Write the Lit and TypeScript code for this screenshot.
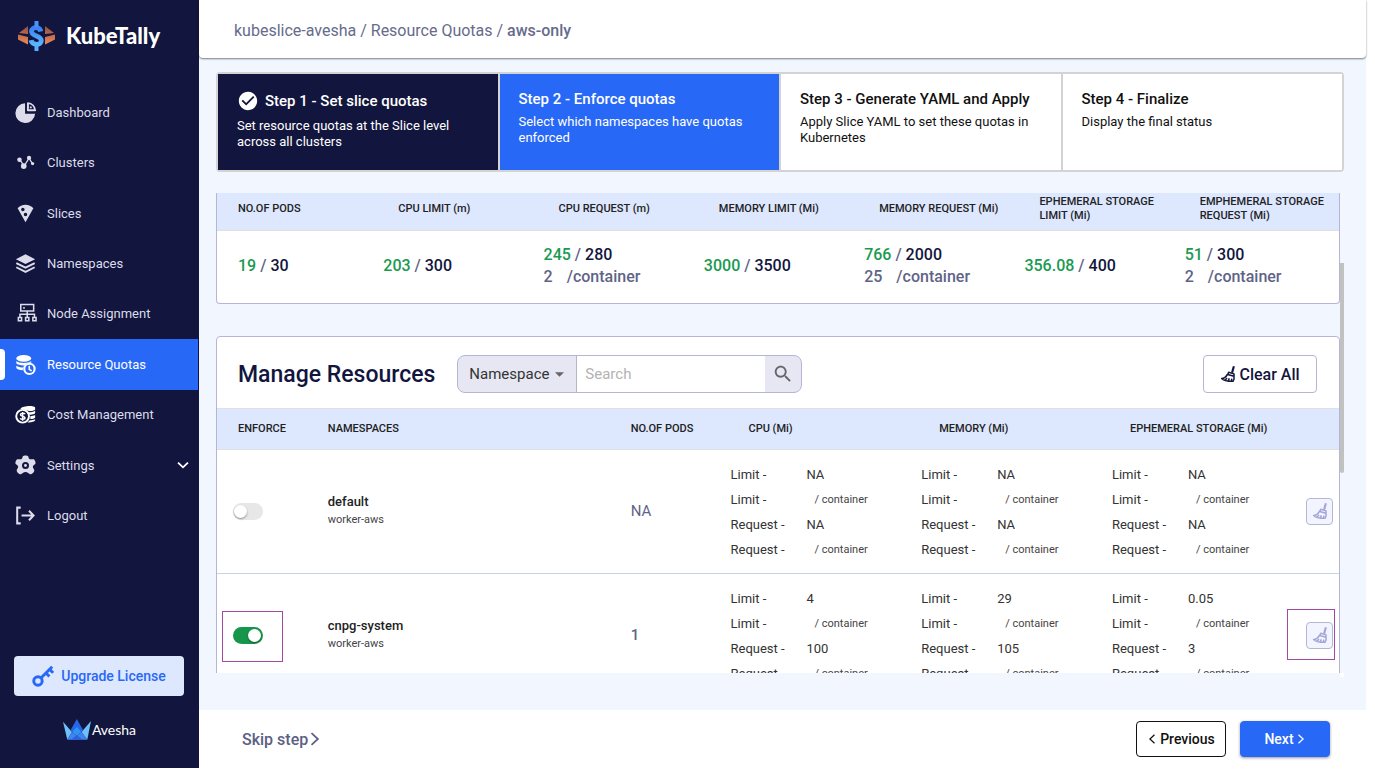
import { LitElement, html, css, svg, nothing } from "lit";
import { customElement } from "lit/decorators.js";
import { classMap } from "lit/directives/class-map.js";

const icons: Record<string, unknown> = {
  dashboard: svg`<path fill="currentColor" d="M11.500 1.500A11.300 11.300 0 1 0 23 13.500H11.500z"/><path fill="none" stroke="currentColor" stroke-width="2.200" stroke-linejoin="round" d="M14.800 1.300c4.300.3 7.800 3.600 8.200 8.200h-8.200zM18 5v2"/>`,
  clusters: svg`<path fill="none" stroke="currentColor" stroke-width="1.800" d="M4 8l6 9 7-11 5 8"/><g fill="currentColor"><circle cx="3.500" cy="8" r="3.200"/><circle cx="9.500" cy="17" r="4"/><circle cx="17" cy="5.500" r="3"/><circle cx="22" cy="13.500" r="2.300"/></g>`,
  slices: svg`<path fill="currentColor" fill-rule="evenodd" d="M12 2C8.400 2 5.200 3.500 3 5.900L12 22l9-16.100C18.800 3.500 15.600 2 12 2zM7 7.500a2 2 0 1 1 4 0 2 2 0 0 1-4 0zm5 7.500a2 2 0 1 1 0-4 2 2 0 0 1 0 4z"/>`,
  namespaces: svg`<path fill="currentColor" d="M12 1.500L1 7l11 5.500L23 7z"/><path fill="none" stroke="currentColor" stroke-width="2.200" d="M1.500 11.500L12 16.800l10.500-5.300M1.500 16.300L12 21.600l10.500-5.300"/>`,
  node: svg`<g transform="translate(2 0) scale(.92)"><g fill="none" stroke="currentColor" stroke-width="1.900"><path d="M5 2h16v8H5zM13 10v8M4 18v-4h18v4"/><path d="M2 18h4v4H2zM11 18h4v4h-4zM20 18h4v4h-4z"/></g><path fill="currentColor" d="M8 5h2v2H8z"/></g>`,
  quotas: svg`<g fill="currentColor"><ellipse cx="10" cy="5" rx="8.500" ry="3.800"/><path d="M1.500 8c2 2.500 13 3.500 17 0v2.200c-3-.5-6 .8-7.600 2.800-4.400.2-8-.8-9.400-2.500zM1.500 13.500c1.800 1.500 4.500 2 8 2-.5 1-.6 2-.5 3-4-.1-7-1.200-7.500-2.500z"/></g><circle cx="16.500" cy="17" r="5.900" fill="none" stroke="currentColor" stroke-width="2.400"/><path fill="none" stroke="currentColor" stroke-width="1.800" d="M16.300 13.500v4l2.700 1.800"/>`,
  cost: svg`<g fill="#fff"><path d="M6 5.500C9 1.500 22 1.500 23 4v2.500c-3 2-8 1.500-10 .5zM14.500 9c4 .8 6.500.2 8.500-1.300v3c-2 1.500-4 1.700-6.500 1.500zM17.500 14c2 0 4-.5 5.500-1.300v3c-1.500 1.200-3 1.600-5.500 1.500zM16.500 18.800c3 0 4.500-.4 6.500-1.300v1c-1 1.700-4 2.700-8.500 2.500z"/></g><circle cx="8.700" cy="14" r="7.300" fill="none" stroke="#fff" stroke-width="2.200"/><path fill="none" stroke="#fff" stroke-width="1.700" d="M11.400 11.600c-.7-1.400-5.200-1.600-5.200.7 0 2.300 5.200 1.200 5.200 3.500s-4.700 2.100-5.400.5M8.700 9v10"/>`,
  settings: svg`<path fill="currentColor" fill-rule="evenodd" d="M9 1.300C9.800.2 14.200.2 15 1.300c.7 1 .5 2.600 1.500 3.400 1 .8 3.400-.4 4.900.2 1.500.7 2.700 4.400 1.800 5.500-.8 1-2.500 1.400-2.800 2.700-.3 1.500 1.600 2.800 1.700 4.500 0 1.700-2.900 4.700-4.700 4.500-1.500-.2-2.900-2.600-5.400-2.600s-3.900 2.400-5.400 2.600c-1.800.2-4.700-2.800-4.700-4.500.1-1.700 2-3 1.700-4.500-.3-1.300-2-1.700-2.800-2.700-.9-1.100.3-4.800 1.800-5.500C4.100 4.300 6.500 5.500 7.500 4.700 8.500 3.900 8.300 2.300 9 1.300zM12 8a4 4 0 1 0 0 8 4 4 0 0 0 0-8zm0 2.300a1.700 1.700 0 1 1 0 3.400 1.700 1.700 0 0 1 0-3.400z"/>`,
  logout: svg`<path fill="none" stroke="currentColor" stroke-width="2.300" d="M6.500 3H2.500v18h4M7.500 12H21M16 6.500l5.200 5.500-5.200 5.500"/>`,
  broom: svg`<path fill="currentColor" d="M19.300 0l3 .9-2.500 9.600-3.300-.9z"/><path fill="none" stroke="currentColor" stroke-width="2.300" stroke-linejoin="round" d="M13 9.500l8 2.300v3.700l-9.500-2.800zM11 12.500C9 16.500 6 18.500 2.500 18.800 5 22 11 23 19.500 23c1.500-2.500 2-5.500 1.500-7.500M8 21l2.500-3M12.500 22l1.500-3.500M17 22.500l.8-3.500"/>`,
  key: svg`<circle cx="6.500" cy="17.500" r="4.600" fill="none" stroke="currentColor" stroke-width="3.200"/><path fill="none" stroke="currentColor" stroke-width="3.200" d="M9.500 14.500L22 2M15 8.500l4 4M19 4.500l4 4"/>`,
  search: svg`<path fill="currentColor" d="M15.500 14h-.79l-.28-.27C15.410 12.590 16 11.110 16 9.500 16 5.910 13.090 3 9.500 3S3 5.910 3 9.500 5.910 16 9.500 16c1.610 0 3.090-.59 4.230-1.570l.27.28v.79l5 4.990L20.490 19l-4.990-5zm-6 0C7.010 14 5 11.990 5 9.500S7.010 5 9.500 5 14 7.010 14 9.500 11.990 14 9.500 14z"/>`,
  check: svg`<path fill="currentColor" d="M12 2C6.480 2 2 6.480 2 12s4.480 10 10 10 10-4.480 10-10S17.520 2 12 2zm-2 15l-5-5 1.410-1.410L10 14.170l7.590-7.590L19 8l-9 9z"/>`,
  down: svg`<path fill="none" stroke="currentColor" stroke-width="3.200" d="M3.500 8l8.500 8 8.500-8"/>`,
  left: svg`<path fill="none" stroke="currentColor" stroke-width="3" d="M18 2L7 12l11 10"/>`,
  right: svg`<path fill="none" stroke="currentColor" stroke-width="3" d="M6 2l11 10L6 22"/>`,
};

const icon = (name: string, cls: string) =>
  html`<svg class=${cls} viewBox="0 0 24 24" aria-hidden="true">${icons[name]}</svg>`;

const navItems = [
  ["dashboard", "Dashboard"],
  ["clusters", "Clusters"],
  ["slices", "Slices"],
  ["namespaces", "Namespaces"],
  ["node", "Node Assignment"],
  ["quotas", "Resource Quotas"],
  ["cost", "Cost Management"],
  ["settings", "Settings"],
  ["logout", "Logout"],
];

const steps = [
  { title: "Step 1 - Set slice quotas", text: "Set resource quotas at the Slice level across all clusters", state: "done" },
  { title: "Step 2 - Enforce quotas", text: "Select which namespaces have quotas enforced", state: "current" },
  { title: "Step 3 - Generate YAML and Apply", text: "Apply Slice YAML to set these quotas in Kubernetes", state: "" },
  { title: "Step 4 - Finalize", text: "Display the final status", state: "" },
];

const totals = [
  { label: "NO.OF PODS", used: "19", max: "30", per: "" },
  { label: "CPU LIMIT (m)", used: "203", max: "300", per: "" },
  { label: "CPU REQUEST (m)", used: "245", max: "280", per: "2" },
  { label: "MEMORY LIMIT (Mi)", used: "3000", max: "3500", per: "" },
  { label: "MEMORY REQUEST (Mi)", used: "766", max: "2000", per: "25" },
  { label: "EPHEMERAL STORAGE LIMIT (Mi)", used: "356.08", max: "400", per: "" },
  { label: "EMPHEMERAL STORAGE REQUEST (Mi)", used: "51", max: "300", per: "2" },
];

const rows = [
  { name: "default", worker: "worker-aws", on: false, pods: "NA", quotas: [["NA", "NA"], ["NA", "NA"], ["NA", "NA"]] },
  { name: "cnpg-system", worker: "worker-aws", on: true, pods: "1", quotas: [["4", "100"], ["29", "105"], ["0.05", "3"]] },
];

@customElement("app-sidebar")
export class AppSidebar extends LitElement {
  static styles = css`
    :host {
      display: flex;
      flex-direction: column;
      width: 199px;
      flex: none;
      box-sizing: border-box;
      background: #12153d;
      color: #dcdcea;
    }
    .brand {
      display: flex;
      align-items: center;
      gap: 11px;
      height: 72px;
      padding-left: 18px;
      margin-bottom: 15px;
      color: #fff;
      font: 900 22px/24px Lato, sans-serif;
    }
    .brand-mark { width: 37px; height: 30px; }
    .nav {
      display: grid;
      grid-auto-rows: 1fr;
      height: 454px;
    }
    .item {
      position: relative;
      display: flex;
      align-items: center;
      margin-right: 1px;
      padding: 0 8px 0 15px;
      color: inherit;
      text-decoration: none;
      font-size: 13px;
    }
    .label { flex: 1; }
    .item.active { background: #2868f6; color: #fff; }
    .item.active::before {
      content: "";
      position: absolute;
      left: 0;
      top: 10px;
      bottom: 10px;
      width: 5px;
      border-radius: 0 4px 4px 0;
      background: #fff;
    }
    .nav-icon { width: 21px; height: 21px; margin-right: 11px; overflow: visible; }
    .nav-icon.small { width: 17px; height: 17px; margin: 0 13px 0 2px; }
    .chevron { width: 14px; height: 14px; color: #fff; }
    .upgrade {
      display: flex;
      align-items: center;
      justify-content: center;
      gap: 7px;
      height: 40px;
      margin: auto 15px 20px 14px;
      border: 0;
      border-radius: 4px;
      background: #dde7fe;
      color: #2868f6;
      font: 500 14px/20px Roboto, sans-serif;
    }
    .key { width: 22px; height: 22px; }
    .maker {
      display: flex;
      align-items: center;
      justify-content: center;
      gap: 1px;
      height: 28px;
      margin-bottom: 24px;
      color: #fff;
      font: 400 14px/20px Lato, sans-serif;
    }
    .crown { width: 28px; height: 22px; }
  `;

  render() {
    return html`
      <div class="brand">
        <svg class="brand-mark" viewBox="0 0 37 30" aria-hidden="true">
          <defs>
            <linearGradient id="rust" x2="0" y2="1"><stop stop-color="#8f4f3d" /><stop offset="1" stop-color="#f08a5c" /></linearGradient>
            <linearGradient id="sky" x2="0" y2="1"><stop stop-color="#3b82f6" /><stop offset="1" stop-color="#5bb5ff" /></linearGradient>
          </defs>
          <path fill="url(#rust)" d="M10 5v8L1 12zM0 13.500l10 2.500v7.500l-10-5zM27 5v8l9-1zM37 13.500L27 16v7.500l10-5z" />
          <path fill="none" stroke="url(#sky)" stroke-width="4.800" d="M22.800 10.500C22 5.500 13.500 5.500 13.500 10.300c0 5.700 9.800 3.700 9.800 9.400 0 5-9.500 5-10.300-.5" />
          <path fill="#4595fa" d="M16.500 0h4v6h-4z" />
          <path fill="#58b0ff" d="M16.500 24h4v6h-4z" />
        </svg>
        <span>KubeTally</span>
      </div>
      <nav class="nav">
        ${navItems.map(
          ([id, label]) => html`<a href="#" class=${classMap({ item: true, active: id === "quotas" })}>
            ${icon(id, id === "clusters" ? "nav-icon small" : "nav-icon")}
            <span class="label">${label}</span>
            ${id === "settings" ? icon("down", "chevron") : nothing}
          </a>`
        )}
      </nav>
      <button class="upgrade">${icon("key", "key")}Upgrade License</button>
      <div class="maker">
        <svg class="crown" viewBox="0 0 28 22" aria-hidden="true">
          <path fill="#6cc0fb" d="M0 2.700L9 13 4.300 20.700z" />
          <path fill="#6cc0fb" d="M28 2l-9.500 11 5.800 7.700z" />
          <path fill="#2767e6" d="M13.800 0L7.500 11.300l6.300 5 6.400-5z" />
          <path fill="#2f93f5" d="M13.800 8L9 13l4.800 4 4.700-4z" />
          <path fill="#3f84f0" d="M9 13l-4.700 7.700h20L18.500 13l-4.700 4z" />
          <path fill="#2a62dc" d="M13.800 16l-6 4.700h12z" />
        </svg>
        <span>Avesha</span>
      </div>
    `;
  }
}

@customElement("app-root")
export class AppRoot extends LitElement {
  static styles = css`
    :host {
      display: flex;
      box-sizing: border-box;
      height: 100vh;
      padding: 0 9px 14px 0;
      background: #fff;
      color: #222;
      font-family: Roboto, sans-serif;
    }
    .page { display: flex; flex: 1; min-width: 0; flex-direction: column; background: #f2f7ff; }
    .top {
      position: relative;
      height: 58px;
      padding: 0 35px;
      display: flex;
      align-items: center;
      border-radius: 0 0 4px 4px;
      background: #fff;
      box-shadow: 0 1px 2px rgba(0, 0, 0, 0.5);
      box-sizing: border-box;
    }
    .crumbs { padding-top: 4px; color: #666b8c; font-size: 16px; line-height: 20px; }
    .crumbs a { color: inherit; text-decoration: none; }
    .crumbs b { font-weight: 500; }
    .content {
      display: flex;
      flex: 1;
      min-height: 0;
      flex-direction: column;
      gap: 21px;
      padding: 14px 22px 33px 17px;
    }
    .steps {
      display: grid;
      grid-template-columns: repeat(4, 1fr);
      gap: 2px;
      min-height: 96px;
      margin: 0;
      padding: 0;
      list-style: none;
      border: 2px solid #d3d3d3;
      border-radius: 4px;
      background: #d3d3d3;
    }
    .step { padding: 15px 19px; background: #fff; color: #111; }
    .step.done { background: #12153d; color: #fff; }
    .step.current { background: #2868f6; color: #fff; }
    .step-title { display: flex; align-items: center; gap: 6px; min-height: 20px; font-size: 15px; line-height: 20px; font-weight: 500; }
    .step.done .step-title { min-height: 24px; }
    .step-text { margin: 5px 0 0; font-size: 13px; line-height: 16px; }
    .check { width: 22px; height: 22px; }
    .viewport {
      display: grid;
      flex: 1;
      min-height: 0;
      grid-template-columns: minmax(0, 1fr) 4px;
      grid-template-rows: minmax(0, 1fr) 4px;
    }
    .scroll { overflow: hidden; }
    .track { display: flex; flex-direction: column; padding-top: 70px; }
    .thumb { height: 210px; border-radius: 0 0 3px 3px; background: #c1c1c1; }
    .corner { grid-column: 2; background: #fff; }
    .card { border: 1px solid #b5b5d6; border-radius: 4px; background: #fff; overflow: hidden; }
    .card.clipped { margin-bottom: 32px; border-top: 0; border-radius: 0 0 4px 4px; }
    table { width: 100%; border-collapse: collapse; table-layout: fixed; }
    th {
      box-sizing: border-box;
      padding: 0 0 0 21px;
      border-bottom: 1px solid #e0e0e0;
      background: #dde7fe;
      font-size: 11px;
      line-height: 14px;
      font-weight: 500;
      text-align: left;
    }
    td { box-sizing: border-box; padding: 0; }
    .totals th { height: 37px; padding-bottom: 4px; }
    .totals td { height: 73px; padding: 0 0 2px 6px; color: #5f6487; font-size: 16px; line-height: 22px; font-weight: 500; }
    .totals td:first-child { padding-left: 21px; }
    .used { color: #1a9a50; }
    .max { color: #12153d; }
    .per { display: flex; gap: 14px; }
    .bar { display: flex; align-items: center; min-height: 72px; box-sizing: border-box; padding: 3px 22px 0 21px; border-bottom: 1px solid #e0e0e0; }
    h2 { margin: 0 22px 0 0; padding-top: 2px; color: #12153d; font-size: 23px; line-height: 28px; font-weight: 500; }
    .search {
      display: flex;
      width: 345px;
      height: 38px;
      box-sizing: border-box;
      border: 1px solid #b5b5d6;
      border-radius: 8px;
      overflow: hidden;
      background: #e6e7f3;
      color: #666;
    }
    .pick { position: relative; display: flex; align-items: center; width: 118px; border-right: 1px solid #b5b5c6; }
    select { width: 100%; height: 100%; padding: 0 0 0 11px; border: 0; appearance: none; background: none; color: #333; font: 400 15px Roboto, sans-serif; }
    .caret { position: absolute; right: 12px; width: 9px; height: 5px; pointer-events: none; }
    input.query { flex: 1; min-width: 0; padding: 0 8px; border: 0; background: #fff; font: 400 15px Roboto, sans-serif; }
    input.query::placeholder { color: #b3b3b3; }
    .go { width: 36px; padding: 0; border: 0; background: none; color: #666; }
    .go-icon { display: block; width: 22px; height: 22px; margin: auto; }
    .clear {
      display: flex;
      align-items: center;
      justify-content: center;
      gap: 3px;
      width: 114px;
      height: 38px;
      margin-left: auto;
      border: 1px solid #b5b5d6;
      border-radius: 4px;
      background: #fff;
      color: #12153d;
      font: 500 16px Roboto, sans-serif;
    }
    .broom { flex: none; width: 16px; height: 16px; overflow: visible; }
    .grid th { height: 40px; }
    .grid tbody tr { height: 124px; border-bottom: 1px solid #c8d3e3; }
    .c-enforce { width: 8%; }
    .c-name { width: 27%; }
    .c-pods { width: 10.5%; }
    .c-quota { width: 17%; }
    .cell-name, .cell-pods { padding-left: 21px; }
    .cell-toggle { padding-left: 16px; }
    .anchor { position: relative; display: block; }
    .toggle {
      display: flex;
      align-items: flex-start;
      appearance: none;
      width: 30px;
      height: 17px;
      margin: 0;
      border-radius: 9px;
      background: #e7e7e7;
    }
    .toggle::before {
      content: "";
      display: block;
      width: 13px;
      height: 13px;
      margin: 2px 0 0 1px;
      border-radius: 50%;
      background: #fff;
      box-shadow: 0 1px 2px rgba(0, 0, 0, 0.4);
    }
    .toggle:checked { justify-content: flex-end; background: #16964b; }
    .toggle:checked::before { margin-right: 2px; }
    .mark { position: absolute; border: 1px solid #a349a4; pointer-events: none; box-sizing: border-box; }
    .mark.at-toggle { left: -11px; top: -16px; width: 61px; height: 51px; }
    .mark.at-broom { right: -2px; top: -13px; width: 48px; height: 51px; }
    .ns { font-size: 13px; line-height: 18px; font-weight: 500; }
    .worker { color: #444; font-size: 11px; line-height: 18px; }
    .cell-pods { color: #5f6487; font-size: 15px; font-weight: 500; }
    .cell-pods.na { font-weight: 400; }
    .cell-quota { padding: 1px 0 0 3px; }
    .quota { display: grid; grid-template-columns: 76px 1fr; margin: 0; font-size: 13px; line-height: 25px; color: #333; }
    .quota dt, .quota dd { margin: 0; }
    .quota .unit { padding-left: 8px; color: #444; font-size: 11px; }
    .cell-action { padding-right: 6px; }
    .wipe {
      display: flex;
      align-items: center;
      justify-content: center;
      width: 27px;
      height: 27px;
      padding: 0;
      border: 1px solid #b5b5d6;
      border-radius: 4px;
      background: #f2f5ff;
      color: #a4a6d8;
    }
    .cell-action .anchor { width: 27px; margin-left: auto; }
    .foot { display: flex; align-items: center; gap: 14px; height: 58px; padding: 0 36px 0 43px; background: #fff; }
    .skip { display: flex; align-items: center; margin-right: auto; color: #5b6084; font-size: 16px; font-weight: 500; text-decoration: none; }
    .skip-icon { width: 14px; height: 14px; }
    .btn {
      display: flex;
      align-items: center;
      justify-content: center;
      gap: 3px;
      width: 90px;
      height: 36px;
      padding: 0;
      border: 1px solid #111;
      border-radius: 4px;
      background: #fff;
      color: #111;
      font: 500 14px Roboto, sans-serif;
    }
    .btn.primary { gap: 2px; border-color: #2868f6; background: #2868f6; color: #fff; box-shadow: 0 1px 3px rgba(0, 0, 0, 0.4); }
    .arrow { width: 10px; height: 10px; }
  `;

  render() {
    return html`
      <app-sidebar></app-sidebar>
      <div class="page">
        <header class="top">
          <div class="crumbs"><a href="#">kubeslice-avesha</a> / <a href="#">Resource Quotas</a> / <b>aws-only</b></div>
        </header>
        <main class="content">
          <ol class="steps">
            ${steps.map(
              (s) => html`<li class="step ${s.state}">
                <div class="step-title">${s.state === "done" ? icon("check", "check") : nothing}<span>${s.title}</span></div>
                <p class="step-text">${s.text}</p>
              </li>`
            )}
          </ol>
          <div class="viewport">
            <div class="scroll">${this.totals()}${this.resources()}</div>
            <div class="track"><div class="thumb"></div></div>
            <div class="corner"></div>
          </div>
        </main>
        <footer class="foot">
          <a class="skip" href="#">Skip step${icon("right", "skip-icon")}</a>
          <button class="btn">${icon("left", "arrow")}Previous</button>
          <button class="btn primary">Next${icon("right", "arrow")}</button>
        </footer>
      </div>
    `;
  }

  private totals() {
    return html`<section class="card clipped">
      <table class="totals">
        <thead><tr>${totals.map((t) => html`<th>${t.label}</th>`)}</tr></thead>
        <tbody><tr>
          ${totals.map(
            (t) => html`<td>
              <span class="used">${t.used}</span> / <span class="max">${t.max}</span>
              ${t.per ? html`<div class="per"><span>${t.per}</span><span>/container</span></div>` : nothing}
            </td>`
          )}
        </tr></tbody>
      </table>
    </section>`;
  }

  private resources() {
    return html`<section class="card">
      <div class="bar">
        <h2>Manage Resources</h2>
        <div class="search">
          <div class="pick">
            <select aria-label="Search by"><option>Namespace</option></select>
            <svg class="caret" viewBox="0 0 10 5" aria-hidden="true"><path fill="#666" d="M0 0h10L5 5z" /></svg>
          </div>
          <input class="query" type="text" placeholder="Search" aria-label="Search" />
          <button class="go" aria-label="Run search">${icon("search", "go-icon")}</button>
        </div>
        <button class="clear">${icon("broom", "broom")}Clear All</button>
      </div>
      <table class="grid">
        <colgroup>
          <col class="c-enforce" /><col class="c-name" /><col class="c-pods" />
          <col class="c-quota" /><col class="c-quota" /><col class="c-quota" /><col />
        </colgroup>
        <thead><tr>
          <th>ENFORCE</th><th>NAMESPACES</th><th>NO.OF PODS</th><th>CPU (Mi)</th>
          <th>MEMORY (Mi)</th><th>EPHEMERAL STORAGE (Mi)</th><th></th>
        </tr></thead>
        <tbody>
          ${rows.map(
            (r) => html`<tr>
              <td class="cell-toggle">
                <span class="anchor">
                  <input class="toggle" type="checkbox" aria-label="Enforce ${r.name}" ?checked=${r.on} />
                  ${r.on ? html`<span class="mark at-toggle"></span>` : nothing}
                </span>
              </td>
              <td class="cell-name"><div class="ns">${r.name}</div><div class="worker">${r.worker}</div></td>
              <td class="cell-pods ${r.pods === "NA" ? "na" : ""}">${r.pods}</td>
              ${r.quotas.map(
                ([limit, request]) => html`<td class="cell-quota">
                  <dl class="quota">
                    <dt>Limit -</dt><dd>${limit}</dd>
                    <dt>Limit -</dt><dd class="unit">/ container</dd>
                    <dt>Request -</dt><dd>${request}</dd>
                    <dt>Request -</dt><dd class="unit">/ container</dd>
                  </dl>
                </td>`
              )}
              <td class="cell-action">
                <span class="anchor">
                  <button class="wipe" aria-label="Clear ${r.name}">${icon("broom", "broom")}</button>
                  ${r.on ? html`<span class="mark at-broom"></span>` : nothing}
                </span>
              </td>
            </tr>`
          )}
        </tbody>
      </table>
    </section>`;
  }
}
